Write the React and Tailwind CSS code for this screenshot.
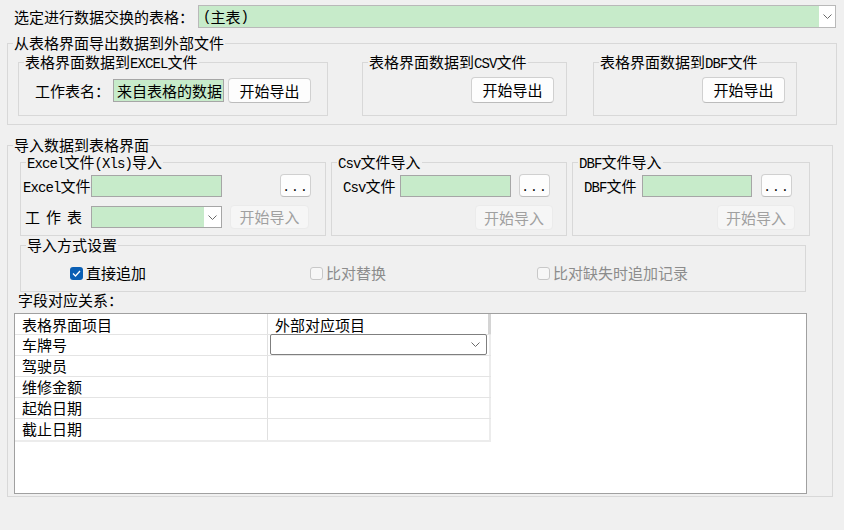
import React from 'react';

const M = ({ children }) => (
  <span className="font-['Liberation_Mono','Noto_Sans_CJK_SC',monospace] text-[14px] tracking-[-0.9px] leading-none">{children}</span>
);

const Chevron = () => (
  <svg width="9" height="5" viewBox="0 0 9 5" className="block">
    <polyline points="0.5,0.5 4.5,4.5 8.5,0.5" fill="none" stroke="#6a6a6a" strokeWidth="1" />
  </svg>
);

const Group = ({ title, className = '', children }) => (
  <fieldset className={`border border-[#d8d8d8] ${className}`}>
    <legend className="ml-[5px] px-[1px] h-[18px] leading-[18px]">{title}</legend>
    {children}
  </fieldset>
);

const Button = ({ children, className = '' }) => (
  <div className={`flex items-center justify-center rounded-[4px] border border-[#d0d0d0] border-b-[#bcbcbc] bg-[#fdfdfd] ${className}`}>
    {children}
  </div>
);

const Disabled = ({ className = '' }) => (
  <div className={`flex items-center justify-center rounded-[4px] border border-[#ebebeb] bg-[#f6f6f6] text-[#a0a0a0] ${className}`}>
    开始导入
  </div>
);

const Dots = ({ className = '' }) => (
  <Button className={`h-[23px] w-[31px] ${className}`}>
    <span className="font-['Liberation_Mono',monospace] text-[13px] leading-none pt-[4px] tracking-[1px]">...</span>
  </Button>
);

const Input = ({ className = '', children }) => (
  <div className={`h-[22px] shrink-0 border border-[#a6a6a6] bg-[#c7ebca] flex items-center ${className}`}>{children}</div>
);

const Check = ({ checked, label, className = '' }) => (
  <div className={`flex items-center ${className}`}>
    {checked ? (
      <div className="w-[13px] h-[13px] rounded-[3px] bg-[#0a5fb4] flex items-center justify-center">
        <svg width="9" height="7" viewBox="0 0 9 7">
          <polyline points="1,3.5 3.5,6 8,1" fill="none" stroke="#fff" strokeWidth="1.3" />
        </svg>
      </div>
    ) : (
      <div className="w-[13px] h-[13px] rounded-[3px] border border-[#c8c8c8] bg-[#f7f7f7]" />
    )}
    <span className={`ml-[3px] ${checked ? 'text-black' : 'text-[#8c8c8c]'}`}>{label}</span>
  </div>
);

const rows = ['车牌号', '驾驶员', '维修金额', '起始日期', '截止日期'];

export default function App() {
  return (
    <div className="w-[844px] h-[530px] overflow-hidden whitespace-nowrap bg-[#f0f0f0] text-[15px] leading-[18px] text-black font-['Noto_Sans_CJK_SC',sans-serif]">

      <div className="flex items-center mt-[5px] ml-[14px] w-[822px] h-[23px]">
        <div className="w-[184px]">选定进行数据交换的表格：</div>
        <div className="flex-1 h-[23px] flex border border-[#b9b9b9] bg-white">
          <div className="flex-1 bg-[#c7ebca] pl-[4px] flex items-center"><M>(</M>主表<M>)</M></div>
          <div className="w-[16px] flex items-center justify-center"><Chevron /></div>
        </div>
      </div>

      <Group title="从表格界面导出数据到外部文件" className="mt-[6px] ml-[7px] w-[830px] h-[91px]">
        <div className="flex">
          <Group title={<>表格界面数据到<M>EXCEL</M>文件</>} className="ml-[10px] mt-[1px] w-[310px] h-[63px]">
            <div className="flex items-center mt-[7px] pl-[16px] h-[25px]">
              <div className="w-[78px]">工作表名：</div>
              <Input className="w-[111px] h-[23px] pl-[3px]">来自表格的数据</Input>
              <Button className="ml-[4px] w-[83px] h-[25px]">开始导出</Button>
            </div>
          </Group>
          <Group title={<>表格界面数据到<M>CSV</M>文件</>} className="ml-[34px] mt-[1px] w-[205px] h-[63px]">
            <div className="flex justify-end mt-[6px] pr-[12px]">
              <Button className="w-[83px] h-[26px]">开始导出</Button>
            </div>
          </Group>
          <Group title={<>表格界面数据到<M>DBF</M>文件</>} className="ml-[26px] mt-[1px] w-[204px] h-[63px]">
            <div className="flex justify-end mt-[6px] pr-[11px]">
              <Button className="w-[83px] h-[26px]">开始导出</Button>
            </div>
          </Group>
        </div>
      </Group>

      <Group title="导入数据到表格界面" className="mt-[11px] ml-[7px] w-[826px] h-[361px]">
        <div className="flex -mt-[1px]">
          <Group title={<><M>Excel</M>文件<M>(Xls)</M>导入</>} className="ml-[12px] w-[306px] h-[83px]">
            <div className="flex items-center mt-[3px] pl-[2px] h-[23px]">
              <div className="w-[68px] shrink-0"><M>Excel</M>文件</div>
              <Input className="w-[131px]" />
              <Dots className="ml-[58px]" />
            </div>
            <div className="flex items-center mt-[8px] pl-[4px] h-[24px]">
              <div className="w-[66px] flex gap-[6px]"><span>工</span><span>作</span><span>表</span></div>
              <div className="w-[131px] h-[22px] flex border border-[#a6a6a6] bg-white">
                <div className="flex-1 bg-[#c7ebca]" />
                <div className="w-[17px] flex items-center justify-center"><Chevron /></div>
              </div>
              <Disabled className="ml-[8px] w-[79px] h-[24px]" />
            </div>
          </Group>
          <Group title={<><M>Csv</M>文件导入</>} className="ml-[5px] w-[236px] h-[83px]">
            <div className="flex items-center mt-[3px] pl-[11px] h-[23px]">
              <div className="w-[57px] shrink-0"><M>Csv</M>文件</div>
              <Input className="w-[111px]" />
              <Dots className="ml-[8px]" />
            </div>
            <div className="flex justify-end mt-[8px] pr-[13px]">
              <Disabled className="w-[78px] h-[25px]" />
            </div>
          </Group>
          <Group title={<><M>DBF</M>文件导入</>} className="ml-[5px] w-[238px] h-[83px]">
            <div className="flex items-center mt-[3px] pl-[11px] h-[23px]">
              <div className="w-[58px] shrink-0"><M>DBF</M>文件</div>
              <Input className="w-[110px]" />
              <Dots className="ml-[9px]" />
            </div>
            <div className="flex justify-end mt-[8px] pr-[14px]">
              <Disabled className="w-[78px] h-[25px]" />
            </div>
          </Group>
        </div>

        <Group title="导入方式设置" className="ml-[12px] w-[786px] h-[56px]">
          <div className="flex items-center mt-[9px] h-[20px] pl-[49px]">
            <Check checked label="直接追加" className="w-[240px]" />
            <Check label="比对替换" className="w-[227px]" />
            <Check label="比对缺失时追加记录" />
          </div>
        </Group>

        <div className="ml-[10px] -mt-[1px]">字段对应关系：</div>

        <div className="mt-[4px] ml-[6px] w-[793px] h-[181px] border border-[#a0a0a0] bg-white">
          <div className="w-[476px] border-b-2 border-[#ececec]">
            <div className="flex h-[21px] border-b border-[#e4e4e4]">
              <div className="w-[253px] pl-[7px] leading-[21px] border-r border-[#e0e0e0]">表格界面项目</div>
              <div className="flex-1 pl-[7px] leading-[21px] border-r-[3px] border-[#d4d4d4]">外部对应项目</div>
            </div>
            {rows.map((r, i) => (
              <div key={r} className={`flex h-[21px] ${i < rows.length - 1 ? 'border-b border-[#e4e4e4]' : ''}`}>
                <div className="w-[253px] pl-[7px] leading-[20px] border-r border-[#e0e0e0]">{r}</div>
                <div className="flex-1 border-r-2 border-[#ececec] pl-[2px]">
                  {i === 0 && (
                    <div className="w-[217px] h-[21px] -mt-[1px] rounded-[2px] border border-[#7f7f7f] flex items-center justify-end pr-[6px]">
                      <Chevron />
                    </div>
                  )}
                </div>
              </div>
            ))}
          </div>
        </div>
      </Group>
    </div>
  );
}
